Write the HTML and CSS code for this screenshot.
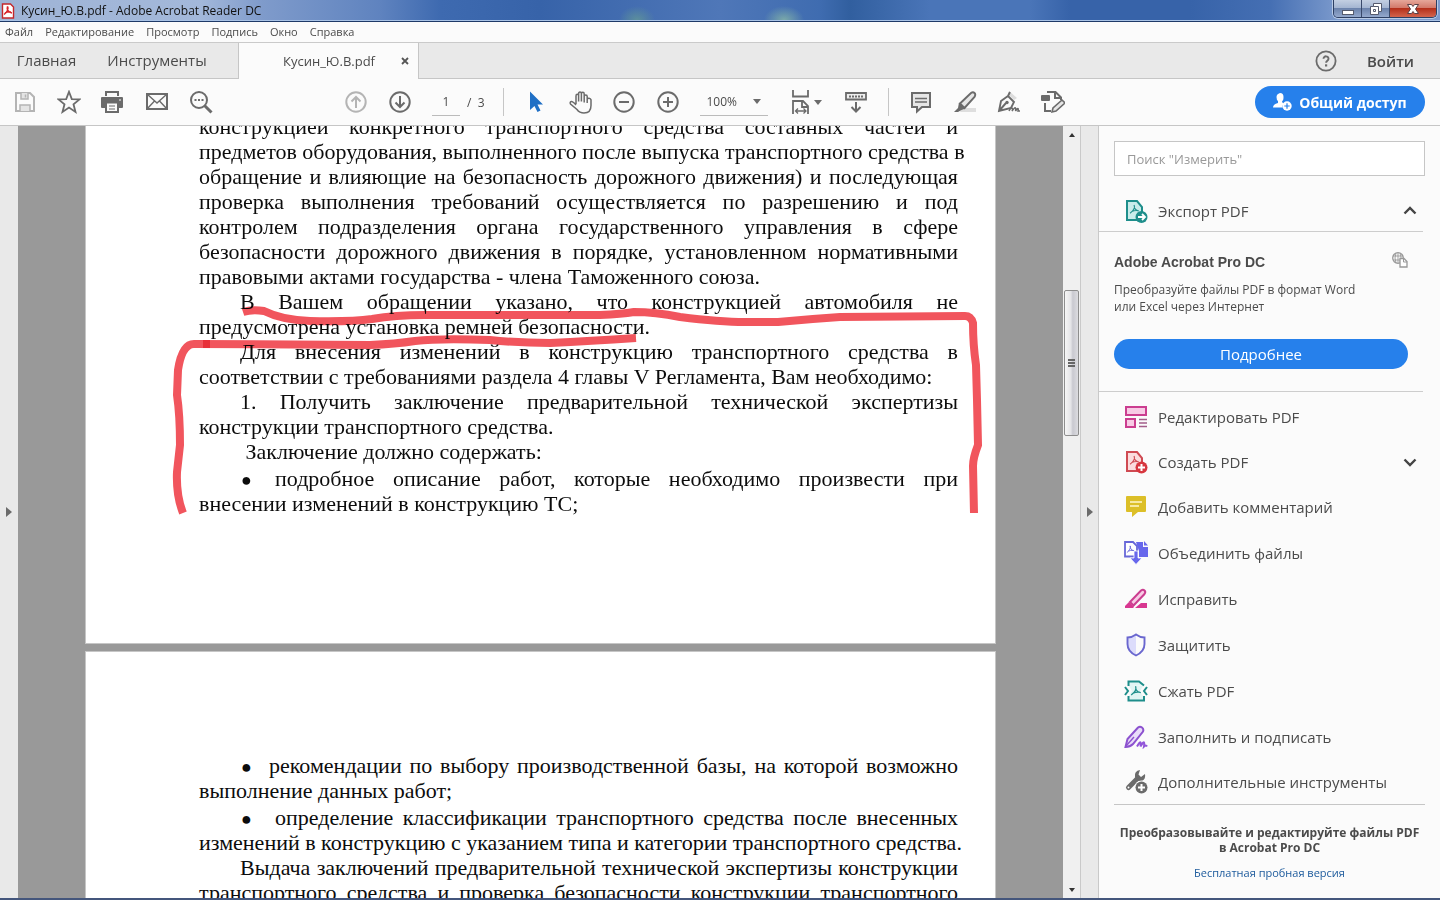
FILE: index.html
```html
<!DOCTYPE html>
<html lang="ru">
<head>
<meta charset="utf-8">
<title>Кусин_Ю.В.pdf - Adobe Acrobat Reader DC</title>
<link rel="stylesheet" href="styles.css">
</head>
<body>
<svg class="defs" aria-hidden="true">
  <symbol id="acro" viewBox="0 0 10 10"><path d="M4.600 1C5.600 3 4 6 1 8.400M4.700 1C4.600 4 6 6 9 6.400M2.500 6.900Q5 5.600 8 6" fill="none" stroke="currentColor" stroke-width="1"/></symbol>
</svg>
<div class="window">
  <header class="titlebar">
    <svg class="app-icon" viewBox="0 0 14 16"><path d="M1.500 1h8l3 3v11h-11z" fill="#fff" stroke="#c3272b" stroke-width="1.400"/><path d="M6.500 3.500c1.500 2-.5 6-3.500 8M6.500 3.500c-1 3 1 6 4.500 6.500M4 9.800q3-1.500 6-.8" fill="none" stroke="#d8232a" stroke-width="1.500"/></svg>
    <span class="title">Кусин_Ю.В.pdf - Adobe Acrobat Reader DC</span>
    <div class="winbtns">
      <button class="wb" aria-label="Свернуть"><svg viewBox="0 0 16 16"><rect x="2.500" y="9.500" width="11" height="4" fill="#fff" stroke="#555b6e"/></svg></button>
      <button class="wb" aria-label="Восстановить"><svg viewBox="0 0 16 16"><path d="M5.500 2.500h8v8h-3v3h-8v-8h3z" fill="#fff" stroke="#555b6e"/><path d="M5.500 5.500h5v5M5.500 8.500h2v2h-2z" fill="none" stroke="#555b6e"/></svg></button>
      <button class="wb close" aria-label="Закрыть"><svg viewBox="0 0 16 16"><path d="M2.500 3.500h4l1.500 2 1.500-2h4l-3 4.500 3 4.500h-4l-1.500-2-1.500 2h-4l3-4.500z" fill="#fff" stroke="#5a4046"/></svg></button>
    </div>
  </header>
  <nav class="menubar">
    <button>Файл</button><button>Редактирование</button><button>Просмотр</button><button>Подпись</button><button>Окно</button><button>Справка</button>
  </nav>
  <div class="tabs">
    <button class="tab">Главная</button>
    <button class="tab tools">Инструменты</button>
    <div class="tab-doc"><button class="doc-name">Кусин_Ю.В.pdf</button><button class="doc-close" aria-label="Закрыть вкладку"><svg viewBox="0 0 8 8"><path d="M1 1l6 6M7 1L1 7" stroke="#555" stroke-width="1.800"/></svg></button></div>
    <div class="account">
      <button class="help" aria-label="Помощь"><svg viewBox="0 0 22 22"><circle cx="11" cy="11" r="9.600" fill="none" stroke="#6b6b6b" stroke-width="1.800"/><path d="M8.500 8.800c0-3.400 5.200-3.200 5 0 0 2-2.400 2-2.400 4" fill="none" stroke="#6b6b6b" stroke-width="1.900"/><rect x="10" y="14.300" width="2.200" height="2.200" fill="#6b6b6b"/></svg></button>
      <button class="login">Войти</button>
    </div>
  </div>
  <div class="toolbar">
    <div class="group">
      <button class="tb" aria-label="Сохранить"><svg viewBox="0 0 24 24"><path d="M3 3h14l4 4v14H3z" fill="none" stroke="#b4b4b4" stroke-width="2"/><path d="M8 3v6h7V3M12.500 4.500v3M7 21v-6h10v6" fill="#e4e4e4" stroke="#b4b4b4" stroke-width="1.500"/></svg></button>
      <button class="tb" aria-label="Избранное"><svg viewBox="0 0 24 24"><path d="M12 1.800l2.800 7.300 7.700.3-6 4.900 2 7.600-6.500-4.300-6.500 4.300 2-7.600-6-4.900 7.700-.3z" fill="none" stroke="#6b6b6b" stroke-width="1.800"/></svg></button>
      <button class="tb" aria-label="Печать"><svg viewBox="0 0 24 24"><path d="M4 1h14v5H4z" fill="#6b6b6b"/><path d="M6 3h10v5H6z" fill="#fbfbfb"/><path d="M0 8q0-1 1-1h20q1 0 1 1v9q0 1-1 1H1q-1 0-1-1z" fill="#6b6b6b"/><path d="M5 12.500h12V22H5z" fill="#fbfbfb" stroke="#6b6b6b" stroke-width="2"/><path d="M8 16h6M8 19h6" stroke="#6b6b6b" stroke-width="1.200"/><path d="M18 10h2" stroke="#fbfbfb"/></svg></button>
      <button class="tb" aria-label="Отправить по почте"><svg viewBox="0 0 24 24"><path d="M2 4h20v15H2z" fill="none" stroke="#6b6b6b" stroke-width="2"/><path d="M2 4l10 9 10-9M2 19l7.500-8M22 19l-7.500-8" fill="none" stroke="#6b6b6b" stroke-width="1.400"/></svg></button>
      <button class="tb" aria-label="Найти"><svg viewBox="0 0 24 24"><circle cx="10" cy="10" r="8" fill="none" stroke="#6b6b6b" stroke-width="2"/><path d="M15.500 15.500l7 7" stroke="#6b6b6b" stroke-width="3"/><path d="M5.500 10h9" stroke="#6b6b6b" stroke-width="2" stroke-dasharray="2 1.500"/></svg></button>
    </div>
    <div class="group nav">
      <button class="tb" aria-label="Предыдущая страница"><svg viewBox="0 0 24 24"><circle cx="12" cy="12" r="9.700" fill="none" stroke="#b4b4b4" stroke-width="2"/><path d="M12 18V7M7.500 11.500L12 7l4.500 4.500" fill="none" stroke="#b4b4b4" stroke-width="2"/></svg></button>
      <button class="tb" aria-label="Следующая страница"><svg viewBox="0 0 24 24"><circle cx="12" cy="12" r="9.700" fill="none" stroke="#6b6b6b" stroke-width="2"/><path d="M12 6v11M7.500 12.500L12 17l4.500-4.500" fill="none" stroke="#6b6b6b" stroke-width="2"/></svg></button>
      <input class="page-no" aria-label="Номер страницы" value="1"><span class="page-total">/ &nbsp;3</span>
    </div>
    <div class="group view">
      <button class="tb" aria-label="Выделение"><svg viewBox="0 0 24 24"><path d="M6 1.500v18.500l4.500-4 3 6 3-1.500-3-6H19z" fill="#1f6fc5"/></svg></button>
      <button class="tb" aria-label="Рука"><svg viewBox="0 0 24 24"><path d="M8 14V6q0-1.700 1.300-1.700T10.600 6V11.500 3.700q0-1.700 1.400-1.700t1.400 1.700V11.500 3.900q0-1.700 1.400-1.700t1.400 1.700V12.500 6.500q0-1.600 1.500-1.600t1.500 1.600V13 9.500q.2-1.500 1.800-1.300T23 9.800V15.500q0 7.500-7 7.500-4.500 0-7-3.500L2.500 14q-1-2 .8-2.400 1.500-.2 4.700 3.400" fill="none" stroke="#6b6b6b" stroke-width="1.500"/></svg></button>
      <button class="tb" aria-label="Уменьшить"><svg viewBox="0 0 24 24"><circle cx="12" cy="12" r="9.700" fill="none" stroke="#6b6b6b" stroke-width="2"/><path d="M7 12h10" stroke="#6b6b6b" stroke-width="2"/></svg></button>
      <button class="tb" aria-label="Увеличить"><svg viewBox="0 0 24 24"><circle cx="12" cy="12" r="9.700" fill="none" stroke="#6b6b6b" stroke-width="2"/><path d="M7 12h10M12 7v10" stroke="#6b6b6b" stroke-width="2"/></svg></button>
      <label class="zoom"><select aria-label="Масштаб"><option>100%</option></select><i class="caret"></i></label>
      <button class="tb fit" aria-label="По ширине"><svg viewBox="0 0 24 24"><path d="M3 0v6.500h15V0M3 24V11h10l5 5v8M12 11v6h6" fill="none" stroke="#6b6b6b" stroke-width="1.800"/><path d="M6 21h10M8 18.500L5.500 21 8 23.500M13.500 18.500L16 21l-2.500 2.500" fill="none" stroke="#6b6b6b" stroke-width="1.300"/></svg><i class="caret"></i></button>
      <button class="tb" aria-label="Режим чтения"><svg viewBox="0 0 24 24"><path d="M2 3h20v6.500H2z" fill="#eee" stroke="#6b6b6b" stroke-width="1.800"/><path d="M5 6.500h14" stroke="#6b6b6b" stroke-width="2" stroke-dasharray="2 1"/><path d="M12 12v9M7.500 17l4.500 4.500 4.500-4.500" fill="none" stroke="#6b6b6b" stroke-width="2"/></svg></button>
    </div>
    <div class="group marks">
      <button class="tb" aria-label="Комментарий"><svg viewBox="0 0 24 24"><path d="M3 3h18v14h-8l-5 4.500V17H3z" fill="#e6e6e6" stroke="#6b6b6b" stroke-width="2"/><path d="M6 8.500h12M6 12h12" stroke="#6b6b6b" stroke-width="1.400"/></svg></button>
      <button class="tb" aria-label="Выделить текст"><svg viewBox="0 0 24 24"><path d="M9 18h14v4H7z" fill="#dedede"/><path d="M7 13.500L18 3q2-1.500 3.500 0t0 4L11.500 18z" fill="#e6e6e6" stroke="#6b6b6b" stroke-width="1.900"/><path d="M6 12.500l6.500 6-4 1.500L5 22H1l4-4z" fill="#6b6b6b"/></svg></button>
      <button class="tb" aria-label="Подписать"><svg viewBox="0 0 24 24"><path d="M12 1l8 7-3 2-6-6z" fill="#ddd"/><path d="M2 21L4 11l7-5 6 6-3 6zM2 21l7-8M11 6l2-4" fill="none" stroke="#6b6b6b" stroke-width="1.900"/><circle cx="10" cy="12.500" r="1.700" fill="#6b6b6b"/><path d="M12 21q2-4 3-3t0 3q3-4 3.500-3t0 3q2-3 2.500-2.500t0 2.500h2" fill="none" stroke="#6b6b6b" stroke-width="1.500"/></svg></button>
      <button class="tb" aria-label="Заполнить форму"><svg viewBox="0 0 24 24"><path d="M6 2h8.500L20 7.500V10M14 2v6h6M4 13v8h6" fill="none" stroke="#6b6b6b" stroke-width="2"/><rect x="0" y="5" width="9" height="6" rx="1" fill="#6b6b6b"/><path d="M11 22l1-4 9-8 3 3-9 8z" fill="#e6e6e6" stroke="#6b6b6b" stroke-width="1.600"/></svg></button>
    </div>
    <button class="share"><svg viewBox="0 0 20 18"><path d="M7 0q3.500 0 3.500 4T9 8q0 2 2 2.500-2 2-1.500 4H0q0-3.500 5-4.500 0-1 0-2Q3.500 7 3.500 4T7 0z" fill="#fff"/><circle cx="14" cy="13" r="4.700" fill="#fff"/><path d="M11.300 13h5.400M14 10.300v5.400" stroke="#2680eb" stroke-width="1.200"/></svg>Общий доступ</button>
  </div>
  <div class="workspace">
    <button class="gutter left" aria-label="Показать панель навигации"><i></i></button>
    <main class="viewer">
      <article class="page first">
        <p>конструкцией конкретного транспортного средства составных частей и<br>предметов оборудования, выполненного после выпуска транспортного средства в<br>обращение и влияющие на безопасность дорожного движения) и последующая<br>проверка выполнения требований осуществляется по разрешению и под<br>контролем подразделения органа государственного управления в сфере<br>безопасности дорожного движения в порядке, установленном нормативными</p>
        <p class="last">правовыми актами государства - члена Таможенного союза.</p>
        <p class="ind">В Вашем обращении указано, что конструкцией автомобиля не</p>
        <p class="last">предусмотрена установка ремней безопасности.</p>
        <p class="ind">Для внесения изменений в конструкцию транспортного средства в</p>
        <p class="last">соответствии с требованиями раздела 4 главы V Регламента, Вам необходимо:</p>
        <p class="ind">1. Получить заключение предварительной технической экспертизы</p>
        <p class="last">конструкции транспортного средства.</p>
        <p class="ind last">&nbsp;Заключение должно содержать:</p>
        <p class="ind item"><span class="bul">●</span>подробное описание работ, которые необходимо произвести при</p>
        <p class="last">внесении изменений в конструкцию ТС;</p>
        <svg class="ink" viewBox="170 300 820 220"><g fill="none" stroke="#f1555d" stroke-width="8"><path d="M243 312Q252 309 264 311Q282 320 310 321Q350 322 372 319Q395 315 425 315L600 315Q622 314 634 312Q655 312 680 317Q720 322 745 322L778 322Q810 319 840 317L965 316Q971 316 973 323Q973 345 976 365L977 400L978 445Q973 458 973 466L974 513"/><path d="M183 513Q176 495 177 472L180 445Q180 415 177 395L178 370Q182 344 194 344L370 345Q395 344 415 341Q440 338 490 340Q520 343 550 343Q590 341 636 338"/></g><rect x="203" y="340" width="7" height="8" fill="#e82f38"/></svg>
      </article>
      <article class="page second">
        <p class="ind item"><span class="bul near">●</span>рекомендации по выбору производственной базы, на которой возможно</p>
        <p class="last">выполнение данных работ;</p>
        <p class="ind item"><span class="bul">●</span>определение классификации транспортного средства после внесенных</p>
        <p class="last">изменений в конструкцию с указанием типа и категории транспортного средства.</p>
        <p class="ind">Выдача заключений предварительной технической экспертизы конструкции</p>
        <p>транспортного средства и проверка безопасности конструкции транспортного</p>
      </article>
    </main>
    <div class="scroll"><i class="up"></i><div class="thumb"><i></i><i></i><i></i></div><i class="down"></i></div>
    <button class="gutter right" aria-label="Скрыть панель инструментов"><i></i></button>
    <aside class="panel">
      <input class="search" type="text" aria-label="Поиск инструментов" placeholder="Поиск &quot;Измерить&quot;">
      <button class="tool export"><svg class="ti teal" viewBox="0 0 24 24"><path d="M3 2h10l5 6v13H3z" fill="#c9ecea" stroke="#1e8e8b" stroke-width="2"/><use href="#acro" x="5" y="5" width="11" height="11"/><circle cx="17.500" cy="18" r="6" fill="#1e8e8b"/><path d="M14 18h6M18 15l3 3-3 3" fill="none" stroke="#fff" stroke-width="1.800"/></svg>Экспорт PDF<svg class="chev" viewBox="0 0 14 10"><path d="M1.500 7.500L7 2l5.500 5.500" fill="none" stroke="#444" stroke-width="2.400"/></svg></button>
      <section class="promo">
        <div class="promo-head"><h2>Adobe Acrobat Pro DC</h2><svg viewBox="0 0 17 16"><circle cx="7" cy="6" r="5.300" fill="none" stroke="#999" stroke-width="1.300"/><path d="M2 4h10M2 8h10M7 1v10M5 1q-2 5 0 10M9 1q2 4 0 9" fill="none" stroke="#999" stroke-width=".9"/><path d="M9 6.500h4l3 3V15H9z" fill="#fff" stroke="#999" stroke-width="1.300"/><path d="M12.500 6.500V10H16" fill="none" stroke="#999"/></svg></div>
        <p>Преобразуйте файлы PDF в формат Word<br>или Excel через Интернет</p>
        <button class="more">Подробнее</button>
      </section>
      <div class="tool-list">
        <button class="tool"><svg class="ti" viewBox="0 0 24 24"><path d="M2 2h20v8H2zM2 14h9v8H2z" fill="#f8cbe5" stroke="#cb3e90" stroke-width="2"/><path d="M15 14.500h8M15 18h8M15 21.500h8" stroke="#a35d8a" stroke-width="1.300"/></svg>Редактировать PDF</button>
        <button class="tool"><svg class="ti red" viewBox="0 0 24 24"><path d="M3 2h10l5 6v13H3z" fill="#fbdcdd" stroke="#cf4a52" stroke-width="2"/><use href="#acro" x="5" y="5" width="11" height="11"/><circle cx="17.500" cy="17.500" r="6" fill="#d7373f"/><path d="M14 17.500h7M17.500 14v7" stroke="#fff" stroke-width="2"/></svg>Создать PDF<svg class="chev" viewBox="0 0 14 10"><path d="M1.500 2.500L7 8l5.500-5.500" fill="none" stroke="#444" stroke-width="2.400"/></svg></button>
        <button class="tool"><svg class="ti" viewBox="0 0 24 24"><path d="M3 1h18q1 0 1 1v14q0 1-1 1h-7l-6 5v-5H3q-1 0-1-1V2q0-1 1-1z" fill="#dcbf28"/><path d="M6 7h12M6 11h9" stroke="#fff7cc" stroke-width="1.600"/></svg>Добавить комментарий</button>
        <button class="tool"><svg class="ti violet" viewBox="0 0 24 24"><path d="M12 1h7v5h5v10h-9v-6z" fill="#6767ec"/><path d="M20 0l4 4.500h-4z" fill="#6767ec"/><path d="M11 15.500H1V1h8l4 4v5" fill="#fff" stroke="#6767d8" stroke-width="1.800"/><use href="#acro" x="2" y="4" width="9" height="9"/><path d="M10 10h4v7h4l-6 6.500L6 17h4z" fill="#6767ec" stroke="#fff" stroke-width=".8"/></svg>Объединить файлы</button>
        <button class="tool"><svg class="ti" viewBox="0 0 24 24"><path d="M11 21l6-5h6v5z" fill="#d83790"/><path d="M6 15L17 3.500q2-1.500 3.500 0t0 3.500L9.500 18.500z" fill="#f8cbe5" stroke="#cb3e90" stroke-width="2"/><path d="M1 21v-2l4-4 5 5-1 1z" fill="#d83790"/></svg>Исправить</button>
        <button class="tool"><svg class="ti" viewBox="0 0 24 24"><path d="M12 2v20Q4 18 4 11V4.500Q9 4.500 12 2z" fill="#dcdcfb"/><path d="M12 1.500Q16 4.500 20.500 4.500V11Q20.500 18.500 12 22.500 3.500 18.500 3.500 11V4.500Q8 4.500 12 1.500z" fill="none" stroke="#6a67cf" stroke-width="1.900"/></svg>Защитить</button>
        <button class="tool"><svg class="ti teal" viewBox="0 0 24 24"><path d="M4.500 7V2.500H15l5 4M4.500 17v4.500h15.500V17" fill="#e0f4f3" stroke="#1e8e8b" stroke-width="2"/><path d="M5 7l3 5-3 5h14l-3-5 3-5z" fill="#e0f4f3"/><path d="M1 8l3 4-3 4M23 8l-3 4 3 4" fill="none" stroke="#1e8e8b" stroke-width="2"/><use href="#acro" x="6" y="6" width="12" height="12"/></svg>Сжать PDF</button>
        <button class="tool"><svg class="ti" viewBox="0 0 24 24"><path d="M1.500 22l2-8L14 2.500q2-1.500 4 0t1 4L9 19q-3 3-7.500 3z" fill="#e9dcf9" stroke="#8c52cf" stroke-width="2"/><path d="M2 21l8-9" stroke="#8c52cf" stroke-width="1.400"/><path d="M13 21.500q3-5 3.500-4t0 4q3-5 3.500-4t0 4q2-2 3 0" fill="none" stroke="#9256d9" stroke-width="2"/></svg>Заполнить и подписать</button>
        <button class="tool"><svg class="ti" viewBox="0 0 24 24"><path d="M4.500 17.500L13 9" stroke="#6b6b6b" stroke-width="5" stroke-linecap="round"/><path d="M16 0q-6 1-5 7 2 5 7 4 4-2 3-7l-4 3-2.500-2.500z" fill="#6b6b6b"/><circle cx="4.500" cy="17.500" r="1" fill="#fff"/><circle cx="17.500" cy="17.500" r="7" fill="#fbfbfb"/><circle cx="17.500" cy="17.500" r="6" fill="#6b6b6b"/><path d="M14 17.500h7M17.500 14v7" stroke="#fff" stroke-width="2"/></svg>Дополнительные инструменты</button>
      </div>
      <footer class="trial"><strong>Преобразовывайте и редактируйте файлы PDF<br>в Acrobat Pro DC</strong><a href="#">Бесплатная пробная версия</a></footer>
    </aside>
  </div>
</div>
</body>
</html>
```
FILE: styles.css
```css
* { box-sizing: border-box; }
body { margin: 0; font-family: "Open Sans", "Noto Sans", sans-serif; color: #4b4b4b; background: #fbfbfb; }
button { font: inherit; color: inherit; background: none; border: 0; padding: 0; margin: 0; white-space: nowrap; }
svg { display: block; flex: none; }
.defs { position: absolute; width: 0; height: 0; }
.window { display: flex; flex-direction: column; height: 100vh; overflow: hidden; border-bottom: 2px solid #44567c; }

.titlebar { flex: none; height: 22px; display: flex; align-items: center; border-bottom: 1px solid #1f3a68; box-shadow: inset 0 -1px #a9c3e6;
  background: radial-gradient(ellipse 18px 14px at 637px 20px, #5c8f9c, transparent), radial-gradient(ellipse 20px 14px at 784px 20px, #7aa9a9, transparent), linear-gradient(90deg, #9fb4d6 0, #a3b8da 200px, #7f9bcb 262px, #5f83bf 380px, #3e6ab0 440px, #3763a9 540px, #4f77b8 720px, #3f6cb0 820px, #315f9f 850px, #4a75b8 930px, #4a75b8 1030px, #3763a9 1070px, #3763a9 1190px, #456fb3 1270px, #7d9bcd 1340px); }
.app-icon { width: 14px; height: 16px; margin: 0 6px 0 1px; }
.title { font-size: 12px; color: #111; white-space: nowrap; }
.winbtns { margin: 0 3px 3px auto; display: flex; align-self: flex-start; height: 18px; border: 1px solid #2d3f63; border-top: 0; border-radius: 0 0 5px 5px; overflow: hidden; box-shadow: 0 0 0 1px #b9cbe6; }
.wb { width: 28px; display: flex; justify-content: center; align-items: center; border-right: 1px solid #39496b; background: linear-gradient(#c3cfe2 0, #a5b6d2 45%, #6c83ac 50%, #94a9cd); }
.wb svg { width: 16px; height: 16px; }
.wb.close { width: 46px; border: 0; background: linear-gradient(#e6a79a 0, #d37a6b 45%, #b5301b 50%, #d3644d); }

.menubar { flex: none; height: 21px; display: flex; align-items: center; gap: 12px; padding-left: 5px; padding-bottom: 1px; font-size: 11px; border-bottom: 1px solid #cacaca; }

.tabs { flex: none; height: 36px; display: flex; background: #e9e9e9; border-bottom: 1px solid #c6c6c6; font-size: 15px; }
.tab { width: 93px; padding-bottom: 1px; }
.tab.tools { width: 128px; margin-right: 17px; }
.tab-doc { display: flex; align-items: center; width: 181px; margin-bottom: -1px; background: #fbfbfb; border: solid #c6c6c6; border-width: 0 1px; font-size: 13px; }
.doc-name { flex: 1; padding-left: 44px; text-align: left; }
.doc-close { width: 8px; margin-right: 9px; }
.account { margin-left: auto; display: flex; align-items: center; gap: 30px; padding-right: 26px; font-weight: 600; }
.help svg { width: 22px; height: 22px; }

.toolbar { flex: none; height: 47px; display: flex; align-items: center; padding-left: 3px; padding-right: 15px; border-bottom: 1px solid #c6c6c6; font-size: 12px; }
.group { display: flex; align-items: center; }
.tb { width: 44px; height: 28px; display: flex; align-items: center; justify-content: center; }
.tb svg { width: 24px; height: 24px; }
.nav { margin-left: 111px; height: 28px; border-right: 1px solid #c6c6c6; padding-right: 18px; }
.page-no { width: 28px; height: 28px; margin: 0 7px 0 10px; padding: 0; text-align: center; font: inherit; color: inherit; background: none; border: 0; border-bottom: 1px solid #bbb; }
.page-total { white-space: nowrap; }
.view { margin-left: 10px; height: 28px; border-right: 1px solid #c6c6c6; padding-right: 10px; }
.zoom { display: flex; align-items: center; width: 68px; height: 28px; margin: 0 20px 0 10px; padding-right: 7px; border-bottom: 1px solid #bbb; }
.zoom select { appearance: none; flex: 1; min-width: 0; padding: 0 0 0 7px; font: inherit; color: inherit; background: none; border: 0; }
.caret { border: 4px solid transparent; border-top: 5px solid #6b6b6b; border-bottom: 0; }
.fit { width: 36px; margin-right: 10px; }
.marks { margin-left: 10px; }
.share { margin-left: auto; height: 32px; width: 170px; display: flex; align-items: center; justify-content: center; gap: 6px; border-radius: 16px; background: #2680eb; color: #fff; font-size: 14px; font-weight: 700; }
.share svg { width: 20px; height: 18px; }

.workspace { flex: 1; min-height: 0; display: flex; }
.gutter { flex: none; width: 18px; display: flex; align-items: center; justify-content: center; background: #e9e9e9; }
.gutter i { border: 5px solid transparent; border-left: 6px solid #6b6b6b; border-right: 0; }
.gutter.right { width: 19px; border: solid #c9c9c9; border-width: 0 1px; }
.viewer { flex: 1; min-width: 0; overflow: hidden; background: #999; padding: 0 67px; }
.page { position: relative; background: #fff; border: 1px solid #c6c6c6; padding: 0 37px 0 113px; font: 22px/25px "Liberation Serif", serif; color: #0c0c0c; text-align: justify; text-align-last: justify; }
.page p { margin: 0; white-space: nowrap; }
.page .last { text-align-last: left; }
.first { margin-top: -13px; padding-bottom: 127px; }
.second { margin-top: 7px; padding-top: 99px; }
.ind { text-indent: 41px; }
.page .item { margin-top: 2px; }
.bul { display: inline-block; width: 35px; text-indent: 1px; text-align-last: left; font-size: 18px; line-height: 20px; }
.bul.near { width: 29px; }
.ink { position: absolute; left: 84px; top: 186px; width: 820px; height: 220px; mix-blend-mode: multiply; }

.scroll { flex: none; width: 17px; display: flex; flex-direction: column; align-items: center; background: #f0f0f0; padding: 7px 0 6px; }
.up { border: 3px solid transparent; border-bottom: 4px solid #333; border-top: 0; }
.down { border: 3px solid transparent; border-top: 4px solid #333; border-bottom: 0; margin-top: auto; }
.thumb { width: 15px; height: 146px; margin-top: 153px; display: flex; flex-direction: column; align-items: center; justify-content: center; gap: 1px; border: 1px solid #8d8d8d; border-radius: 2px; background: linear-gradient(90deg, #f6f6f6, #e4e4e7 45%, #c9c9d0 60%, #dcdce0); }
.thumb i { width: 7px; height: 2px; background: #666; }

.panel { flex: none; width: 341px; padding: 15px 15px 0; }
.search { display: block; width: 100%; height: 35px; padding: 0 12px; font: 13px "Open Sans", sans-serif; color: #4b4b4b; background: #fff; border: 1px solid #c6c6c6; }
.search::placeholder { color: #999; opacity: 1; }
.tool { display: flex; align-items: center; width: 100%; height: 46px; padding: 0 8px 0 10px; font-size: 15px; text-align: left; }
.ti { width: 24px; height: 24px; margin-right: 10px; }
.teal { color: #1e8e8b; }
.red { color: #cf4a52; }
.violet { color: #6767d8; }
.chev { width: 14px; height: 10px; margin-left: auto; }
.export { height: 40px; margin-top: 15px; }
.promo { margin: 0 2px 0 -15px; padding: 20px 15px 22px; border: solid #cdcdcd; border-width: 1px 0; }
.promo-head { display: flex; justify-content: space-between; align-items: flex-start; }
.promo-head svg { width: 17px; height: 16px; }
.promo h2 { margin: 0; font: bold 14px/20px "Liberation Sans", sans-serif; }
.promo p { margin: 9px 0 24px; font-size: 12px; line-height: 17px; white-space: nowrap; }
.more { display: block; width: 100%; height: 30px; border-radius: 15px; background: #2680eb; color: #fff; font-size: 15px; }
.tool-list { padding-top: 2px; border-bottom: 1px solid #c6c6c6; }
.tool-list .tool:nth-child(-n+2) { height: 45px; }
.tool-list .tool:last-child { height: 44px; }
.trial { padding-top: 20px; text-align: center; font-size: 12px; line-height: 15px; white-space: nowrap; }
.trial strong, .trial a { display: block; }
.trial a { margin-top: 10px; font-size: 11px; color: #1c5a9c; text-decoration: none; }
```
